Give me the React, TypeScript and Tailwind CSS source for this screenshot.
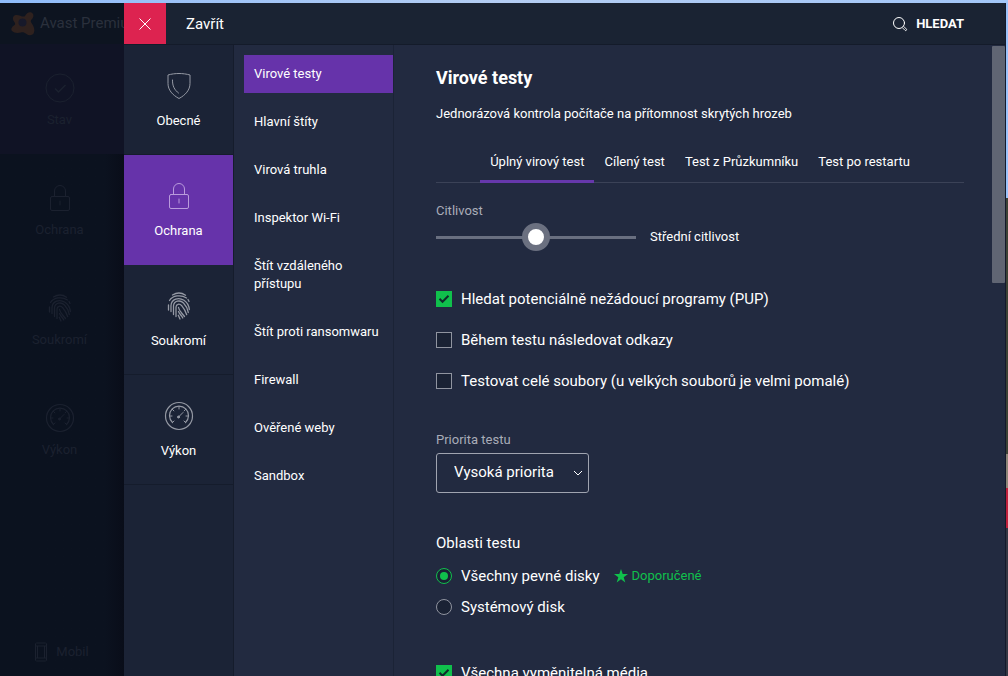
import React, { useState } from 'react';
import clsx from 'clsx';

type IconProps = { className?: string };

function ShieldIcon({ className }: IconProps) {
  return (
    <svg viewBox="0 0 30 30" className={className} fill="none" stroke="currentColor" strokeLinecap="round" strokeLinejoin="round">
      <path d="M15 2.500c4 0 7.500.5 11 1.500v8.500c0 6.500-4.500 11.500-11 15-6.500-3.500-11-8.500-11-15V4c3.500-1 7-1.500 11-1.500z" />
      <path d="M8.500 9c-.2 6 2 10 6 13" />
    </svg>
  );
}

function LockIcon({ className }: IconProps) {
  return (
    <svg viewBox="0 0 30 30" className={className} fill="none" stroke="currentColor" strokeLinecap="round">
      <rect x="5.500" y="13.500" width="19" height="14" rx="1.500" />
      <path d="M9.500 13V8a5.500 5.500 0 0 1 11 0v5M15 18v4" />
    </svg>
  );
}

function FingerprintIcon({ className }: IconProps) {
  return (
    <svg viewBox="0 0 30 30" className={className} fill="none" stroke="currentColor" strokeWidth="1.3" strokeLinecap="round">
      <path d="M8.500 4c4-2.500 9-2.500 13 .2M5.500 9.500C8.500 4.500 17 3.200 22.500 7M24 8.500l1 2" />
      <path d="M4.500 14v5M7 20.500v-6C7.500 8 14.500 5.800 20 9.200c3 2 5 5 5.300 9.300" />
      <path d="M9.500 23.500v-8.700c.5-5 6.500-6.300 10-2.800 2.500 2.500 4 5.500 4.800 9.500" />
      <path d="M12 25.500V16c.2-3 3.500-3.800 5.700-1.300 2.500 3 4 6 5 9" />
      <path d="M14.500 16.500c.5 3.500 3.500 5.500 6 9M14.500 20.500c1 2.500 3 4 4.300 6.500M14.300 24.300l1.700 3.700" />
    </svg>
  );
}

function GaugeIcon({ className }: IconProps) {
  return (
    <svg viewBox="0 0 30 30" className={className} fill="none" stroke="currentColor" strokeLinecap="round">
      <circle cx="15" cy="15" r="13.500" strokeWidth="1.200" />
      <path d="M8.500 21.500a9.500 9.500 0 1 1 13 0" strokeWidth="1.200" />
      <path d="M15 5.500V8M8.300 8.300l1.600 1.600M21.700 8.300l-1.600 1.600M5.500 15H8M24.500 15H22M8.500 21.500l1.500-1.500M21.500 21.500L20 20" />
      <path d="M14.500 16l4.500-4.500" />
      <circle cx="14.500" cy="16" r="1" fill="currentColor" />
    </svg>
  );
}

function CheckCircleIcon({ className }: IconProps) {
  return (
    <svg viewBox="0 0 30 30" className={className} fill="none" stroke="currentColor">
      <circle cx="15" cy="15" r="14" />
      <path d="M10 15.500l3.500 3.500 7-7" strokeWidth="1.500" />
    </svg>
  );
}

function PhoneIcon({ className }: IconProps) {
  return (
    <svg viewBox="0 0 12 20" className={className} fill="none" stroke="currentColor">
      <rect x=".5" y="1" width="11" height="18" rx="1" />
      <path d="M.5 4h11M.5 16h11M2.500 4v12M9.500 4v12" />
    </svg>
  );
}

function AvastLogo({ className }: IconProps) {
  return (
    <svg viewBox="0 0 26 26" className={className}>
      <path fill="currentColor" d="M15 5c1.500-3 4-4.500 6.500-3.500C24 3 24 6 22 8c-1.500 1.500-1.500 2.500-.5 4 2.500 3.500 3.500 6.500 2.500 9.500-1 3-5 3.500-7.500 1.500-2-1.500-3.500-2-5.500-1.500-3.500 1-7 .5-9-1.500-1.500-2 0-4.500 2-5.500 1.500-1 1.500-2 0-4-2-3-1-6 2-6.500 3-.5 7.500 3 9 1z" />
      <circle cx="12.500" cy="11.500" r="4" fill="#17192a" />
    </svg>
  );
}

function SearchIcon({ className }: IconProps) {
  return (
    <svg viewBox="0 0 16 16" className={className} fill="none" stroke="currentColor" strokeLinecap="round">
      <circle cx="7" cy="7" r="5.500" />
      <path d="M10.500 11.800l2.500 2.500a.9.900 0 0 0 1.300-1.300l-2.500-2.500" strokeWidth=".9" />
    </svg>
  );
}

const SECTIONS = [
  { id: 'general',     label: 'Obecné',   Icon: ShieldIcon },
  { id: 'protection',  label: 'Ochrana',  Icon: LockIcon },
  { id: 'privacy',     label: 'Soukromí', Icon: FingerprintIcon },
  { id: 'performance', label: 'Výkon',    Icon: GaugeIcon },
];

const APP_SECTIONS = [{ id: 'status', label: 'Stav', Icon: CheckCircleIcon }, ...SECTIONS.slice(1)];

const PAGES = [
  'Virové testy', 'Hlavní štíty', 'Virová truhla', 'Inspektor Wi-Fi', 'Štít vzdáleného přístupu',
  'Štít proti ransomwaru', 'Firewall', 'Ověřené weby', 'Sandbox',
];

const TABS = ['Úplný virový test', 'Cílený test', 'Test z Průzkumníku', 'Test po restartu'];

const LEVELS = ['Nízká citlivost', 'Střední citlivost', 'Vysoká citlivost'];

function Check({ label, defaultChecked = false }: { label: string; defaultChecked?: boolean }) {
  return (
    <label className="flex items-center gap-[9px] text-[15px] leading-5">
      <span className="grid">
        <input type="checkbox" defaultChecked={defaultChecked}
          className="peer col-start-1 row-start-1 size-4 appearance-none border border-[#9094a0] bg-[#1a2234] checked:border-[#10c04c] checked:bg-[#10c04c]" />
        <svg viewBox="0 0 16 16" fill="none" stroke="#102b2c" strokeWidth="2"
          className="pointer-events-none invisible col-start-1 row-start-1 size-4 peer-checked:visible">
          <path d="M3.500 7.800l3 3 6-6" />
        </svg>
      </span>
      {label}
    </label>
  );
}

function Radio({ label, defaultChecked = false }: { label: string; defaultChecked?: boolean }) {
  return (
    <label className="flex items-center gap-[9px] text-[15px] leading-5">
      <span className="grid place-items-center">
        <input type="radio" name="area" defaultChecked={defaultChecked}
          className="peer col-start-1 row-start-1 size-4 appearance-none rounded-full border border-[#9094a0] bg-[#1a2234] checked:border-[#10c04c]" />
        <span className="pointer-events-none invisible col-start-1 row-start-1 size-2 rounded-full bg-[#10c04c] peer-checked:visible" />
      </span>
      {label}
    </label>
  );
}

function AppBackdrop() {
  return (
    <div className="flex w-[124px] shrink-0 flex-col overflow-hidden bg-linear-to-r from-[#0b121f] from-85% to-[#090d19] text-[#1b212f]">
      <div className="flex h-[41px] shrink-0 items-center gap-1 bg-[#0d1420] pl-[10px] text-[15px] whitespace-nowrap text-[#2a303c]">
        <AvastLogo className="size-[26px] shrink-0 text-[#2e211e]" />
        Avast Premium
      </div>
      {APP_SECTIONS.map(({ id, label, Icon }, i) => (
        <div key={id} className={clsx('flex h-[110px] shrink-0 flex-col items-center pr-[5px] pt-[29px] text-[13px] leading-[18px]', i === 0 && 'bg-[#101325]')}>
          <Icon className="mb-2 size-[30px]" />
          {label}
        </div>
      ))}
      <div className="mt-auto flex items-center justify-center gap-[9px] pb-[14px] text-[13px] leading-[18px]">
        <PhoneIcon className="h-5 w-3" />
        Mobil
      </div>
    </div>
  );
}

export default function App() {
  const [section, setSection] = useState('protection');
  const [page, setPage]       = useState(PAGES[0]);
  const [tab, setTab]         = useState(TABS[0]);
  const [level, setLevel]     = useState(1);

  return (
    <div className="flex h-screen flex-col overflow-hidden bg-[#9cc3fb] font-['Roboto',sans-serif] text-white">
      <div className="h-[3px] shrink-0 bg-linear-to-r from-[#8fbcfa] via-[#b4cdf3] to-[#a2c6f8]" />
      <div className="flex min-h-0 grow">
        <AppBackdrop />

        <div className="flex min-w-0 grow flex-col border-r border-[#141a2b] bg-[#222a40]">
          <header className="flex h-[42px] shrink-0 items-center border-b border-[#141b2a] bg-[#1a2333]">
            <button aria-label="Zavřít nastavení" className="grid h-full w-[42px] place-items-center bg-[#dd2350]">
              <svg viewBox="0 0 12 12" className="size-3" stroke="white">
                <path d="M.5.500l11 11M11.500.500l-11 11" />
              </svg>
            </button>
            <span className="pl-5 text-[15px] leading-5">Zavřít</span>
            <button className="mr-[41px] ml-auto flex items-center gap-2 text-[13px] leading-[18px] font-bold">
              <SearchIcon className="size-4" />
              HLEDAT
            </button>
          </header>

          <div className="flex min-h-0 grow">
            <nav className="flex w-[110px] shrink-0 flex-col border-r border-[#151c2c] bg-[#1b2336]">
              {SECTIONS.map(({ id, label, Icon }) => (
                <button key={id} onClick={() => setSection(id)}
                  className={clsx('flex h-[110px] shrink-0 flex-col items-center border-b pt-[26px] text-[13px] leading-[18px]',
                    section === id ? 'border-[#6633aa] bg-[#6633aa]' : 'border-[#151c2c]')}>
                  <Icon className={clsx('mb-[11px] size-[30px]', section === id ? 'text-[#b99bdc]' : 'text-[#9599a4]')} />
                  {label}
                </button>
              ))}
            </nav>

            <nav className="flex w-[160px] shrink-0 flex-col gap-[10px] border-r border-[#1b2336] pt-[10px] pl-[10px]">
              {PAGES.map(p => (
                <button key={p} onClick={() => setPage(p)}
                  className={clsx('p-[10px] text-left text-[13px] leading-[18px]', page === p && 'bg-[#6633aa]')}>
                  {p}
                </button>
              ))}
            </nav>

            <main className="flex min-w-0 grow flex-col overflow-hidden pt-[21px] pr-7 pl-[42px]">
              <h1 className="text-[18px] leading-6 font-bold">{page}</h1>
              <p className="mt-[15px] text-[13px] leading-[18px]">Jednorázová kontrola počítače na přítomnost skrytých hrozeb</p>

              <div role="tablist" className="mt-[30px] flex shrink-0 justify-center border-b border-[#3b4257]">
                {TABS.map(t => (
                  <button key={t} role="tab" aria-selected={tab === t} onClick={() => setTab(t)}
                    className={clsx('-mb-px border-b-3 px-[10px] pb-[9px] text-[13px] leading-[18px] whitespace-nowrap',
                      tab === t ? 'border-[#6638ab]' : 'border-transparent')}>
                    {t}
                  </button>
                ))}
              </div>

              <label htmlFor="sensitivity" className="mt-[19px] text-[13px] leading-[18px] text-[#a9acb8]">Citlivost</label>
              <div className="mt-[3px] flex items-center gap-[14px]">
                <input id="sensitivity" type="range" min={0} max={2} value={level} onChange={e => setLevel(Number(e.target.value))}
                  className="h-7 w-[200px] appearance-none bg-transparent [&::-webkit-slider-runnable-track]:h-[3px] [&::-webkit-slider-runnable-track]:bg-[#696f80] [&::-webkit-slider-thumb]:-mt-[13px] [&::-webkit-slider-thumb]:size-7 [&::-webkit-slider-thumb]:appearance-none [&::-webkit-slider-thumb]:rounded-full [&::-webkit-slider-thumb]:border-6 [&::-webkit-slider-thumb]:border-[#6b7080] [&::-webkit-slider-thumb]:bg-white" />
                <output htmlFor="sensitivity" className="text-[13px] leading-[18px]">{LEVELS[level]}</output>
              </div>

              <div className="mt-[38px] flex flex-col gap-[21px]">
                <Check label="Hledat potenciálně nežádoucí programy (PUP)" defaultChecked />
                <Check label="Během testu následovat odkazy" />
                <Check label="Testovat celé soubory (u velkých souborů je velmi pomalé)" />
              </div>

              <label htmlFor="priority" className="mt-[40px] text-[13px] leading-[18px] text-[#a9acb8]">Priorita testu</label>
              <div className="mt-1 grid w-[153px] shrink-0 items-center">
                <select id="priority" defaultValue="high"
                  className="col-start-1 row-start-1 h-10 appearance-none rounded-[3px] border border-[#a0a4b0] bg-[#222a40] pr-7 pb-[2px] pl-[17px] text-[15px]">
                  <option value="high">Vysoká priorita</option>
                  <option value="medium">Střední priorita</option>
                  <option value="low">Nízká priorita</option>
                </select>
                <svg viewBox="0 0 10 6" fill="none" stroke="currentColor"
                  className="pointer-events-none col-start-1 row-start-1 mr-[6px] h-[6px] w-[10px] justify-self-end">
                  <path d="M1 1l4 4 4-4" />
                </svg>
              </div>

              <fieldset className="mt-[40px] shrink-0">
                <legend className="text-[15px] leading-5">Oblasti testu</legend>
                <div className="mt-[13px] flex flex-col gap-[11px]">
                  <div className="flex items-center gap-[14px]">
                    <Radio label="Všechny pevné disky" defaultChecked />
                    <span className="flex items-center gap-1 text-[13px] leading-[18px] text-[#10c04c]">
                      <svg viewBox="0 0 14 14" className="size-[14px]" fill="currentColor">
                        <path d="M7 0l1.700 5H14L9.700 8.200 11.300 13.500 7 10.300 2.700 13.500 4.300 8.200 0 5h5.300z" />
                      </svg>
                      Doporučené
                    </span>
                  </div>
                  <Radio label="Systémový disk" />
                </div>
              </fieldset>

              <div className="mt-[46px]">
                <Check label="Všechna vyměnitelná média" defaultChecked />
              </div>
            </main>

            <div className="w-[13px] shrink-0 pt-px">
              <div className="h-[237px] rounded-[1px] bg-[#606573]" />
            </div>
          </div>
        </div>

        {/* sliver of the desktop behind the window */}
        <div className="flex w-[2px] shrink-0 flex-col">
          <div className="basis-[29%] bg-[#9cc3fb]" />
          <div className="basis-[38%] bg-[#3c4236]" />
          <div className="basis-[5%] bg-[#8d8578]" />
          <div className="basis-[6%] bg-[#c0203c]" />
          <div className="grow bg-[#343744]" />
        </div>
      </div>
    </div>
  );
}
